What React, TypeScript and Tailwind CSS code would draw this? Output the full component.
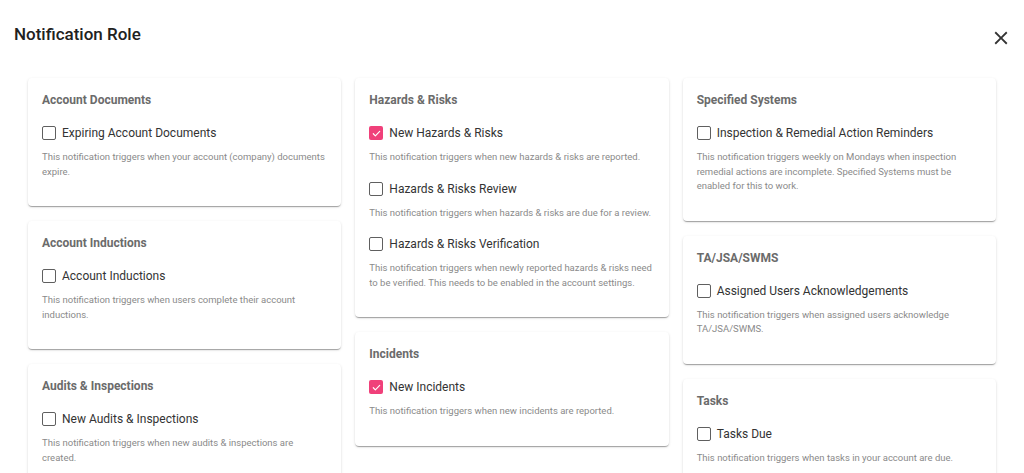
import React from 'react';

type Item = { label: string; desc: string; checked?: boolean };
type Section = { title: string; items: Item[] };

const columns: Section[][] = [
    [
        {
            title: 'Account Documents',
            items: [{ label: 'Expiring Account Documents', desc: 'This notification triggers when your account (company) documents expire.' }],
        },
        {
            title: 'Account Inductions',
            items: [{ label: 'Account Inductions', desc: 'This notification triggers when users complete their account inductions.' }],
        },
        {
            title: 'Audits & Inspections',
            items: [{ label: 'New Audits & Inspections', desc: 'This notification triggers when new audits & inspections are created.' }],
        },
    ],
    [
        {
            title: 'Hazards & Risks',
            items: [
                { label: 'New Hazards & Risks', desc: 'This notification triggers when new hazards & risks are reported.', checked: true },
                { label: 'Hazards & Risks Review', desc: 'This notification triggers when hazards & risks are due for a review.' },
                { label: 'Hazards & Risks Verification', desc: 'This notification triggers when newly reported hazards & risks need to be verified. This needs to be enabled in the account settings.' },
            ],
        },
        {
            title: 'Incidents',
            items: [{ label: 'New Incidents', desc: 'This notification triggers when new incidents are reported.', checked: true }],
        },
    ],
    [
        {
            title: 'Specified Systems',
            items: [{ label: 'Inspection & Remedial Action Reminders', desc: 'This notification triggers weekly on Mondays when inspection remedial actions are incomplete. Specified Systems must be enabled for this to work.' }],
        },
        {
            title: 'TA/JSA/SWMS',
            items: [{ label: 'Assigned Users Acknowledgements', desc: 'This notification triggers when assigned users acknowledge TA/JSA/SWMS.' }],
        },
        {
            title: 'Tasks',
            items: [{ label: 'Tasks Due', desc: 'This notification triggers when tasks in your account are due.' }],
        },
    ],
];

const Checkbox: React.FC<{ checked?: boolean }> = ({ checked }) =>
    checked ? (
        <span className="w-[14px] h-[14px] rounded-[2px] bg-[#f0407a] flex items-center justify-center shrink-0">
            <svg viewBox="0 0 24 24" className="w-[11px] h-[11px]" fill="none" stroke="white" strokeWidth="2.5" strokeLinecap="round" strokeLinejoin="round">
                <path d="M5 12.5l4.5 4.5L19 7.5" />
            </svg>
        </span>
    ) : (
        <span className="w-[14px] h-[14px] rounded-[2px] border-[1.5px] border-[#5f5f5f] shrink-0" />
    );

const Card: React.FC<{ section: Section }> = ({ section }) => (
    <div className="bg-white rounded-[4px] shadow-[0_2px_1px_-1px_rgba(0,0,0,0.2),0_1px_1px_0_rgba(0,0,0,0.14),0_1px_3px_0_rgba(0,0,0,0.12)] px-[14px] pt-[14px] pb-[27px]">
        <h3 className="text-[12px] leading-[16px] font-bold text-[#6b6b6b]">{section.title}</h3>
        {section.items.map((item, i) => (
            <div key={item.label} className={i === 0 ? 'mt-[15px]' : 'mt-[14px]'}>
                <label className="flex items-center gap-[6px] h-[20px]">
                    <Checkbox checked={item.checked} />
                    <span className="text-[12px] text-[#333]">{item.label}</span>
                </label>
                <p className="mt-[7px] text-[9.5px] leading-[14.5px] text-[#8a8a8a]">{item.desc}</p>
            </div>
        ))}
    </div>
);

export default function App() {
    return (
        <div className="bg-white min-h-screen font-['Roboto',sans-serif]">
            <div className="flex justify-between px-[14px] pt-[24px]">
                <h2 className="text-[17px] leading-[20px] font-medium text-[#212121]">Notification Role</h2>
                <svg viewBox="0 0 24 24" className="w-[22px] h-[22px] mt-[3px] -mr-[2px]" fill="#333">
                    <path d="M19 6.41L17.59 5 12 10.59 6.41 5 5 6.41 10.59 12 5 17.59 6.41 19 12 13.41 17.59 19 19 17.59 13.41 12z" />
                </svg>
            </div>
            <div className="grid grid-cols-3 gap-[14px] px-[28px] mt-[29px]">
                {columns.map((col, i) => (
                    <div key={i} className="flex flex-col gap-[15px]">
                        {col.map((s) => (
                            <Card key={s.title} section={s} />
                        ))}
                    </div>
                ))}
            </div>
        </div>
    );
}
